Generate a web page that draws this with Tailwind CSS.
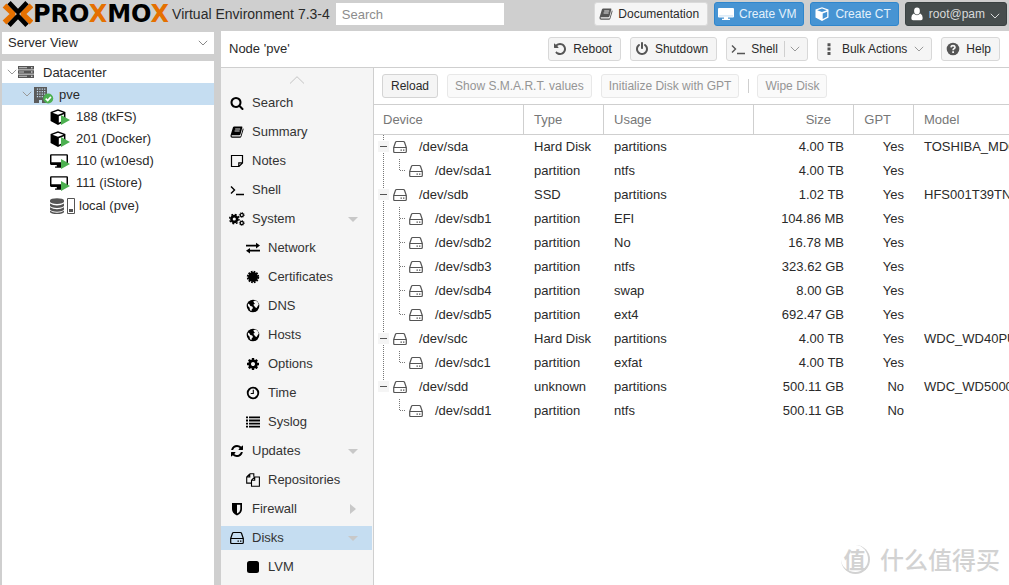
<!DOCTYPE html>
<html lang="en">
<head>
<meta charset="utf-8">
<title>pve - Proxmox Virtual Environment</title>
<script src="https://cdn.jsdelivr.net/npm/@tailwindcss/browser@4"></script>
</head>
<body class="flex h-screen flex-col overflow-hidden bg-[#cfcfcf] font-['Liberation_Sans',Arial,sans-serif] text-[13px] leading-4 text-[#2a2a2a]">

<svg class="hidden" aria-hidden="true">
  <symbol id="search" viewBox="0 0 1792 1792"><path d="M1216 832q0-185-131.500-316.500t-316.500-131.500-316.500 131.500-131.500 316.500 131.500 316.500 316.500 131.500 316.500-131.500 131.500-316.500zm512 832q0 52-38 90t-90 38q-54 0-90-38l-343-342q-179 124-399 124-143 0-273.500-55.500t-225-150-150-225-55.500-273.500 55.500-273.500 150-225 225-150 273.500-55.500 273.500 55.500 225 150 150 225 55.500 273.500q0 220-124 399l343 343q37 37 37 90z"/></symbol>
  <symbol id="book" viewBox="0 0 14 14"><path d="M4.300 1.500h7.500q.8 0 .6.800l-2 7.200q-.3.800-1.200.8H2.300q-.8 0-.8.500t.8.600h7.600q.6 0 .8-.5l2.200-7.600q.9.300.6 1.300l-2.100 7q-.4 1.200-1.600 1.200H2.100Q.4 12.800.5 11q0-.6.300-1.400L2.900 2.500q.3-1 1.400-1z"/><path d="M5.200 4h5M4.600 6h5" stroke="#f5f5f5" stroke-width=".9"/></symbol>
  <symbol id="note" viewBox="0 0 14 14"><path d="M1.500 1.500h11v7.500l-3.500 3.500H1.500zM12.500 8.800H8.800v3.700" fill="none" stroke="currentColor" stroke-width="1.200"/></symbol>
  <symbol id="prompt" viewBox="0 0 14 14"><path d="M1 3.500 4.500 7 1 10.500M6 11.500h8" fill="none" stroke="currentColor" stroke-width="1.400"/></symbol>
  <symbol id="cog" viewBox="0 0 1792 1792"><path d="M1152 896q0-106-75-181t-181-75-181 75-75 181 75 181 181 75 181-75 75-181zm512-109v222q0 12-8 23t-20 13l-185 28q-19 54-39 91 35 50 107 138 10 12 10 25t-9 23q-27 37-99 108t-94 71q-12 0-26-9l-138-108q-44 23-91 38-16 136-29 186-7 28-36 28h-222q-14 0-24.500-8.500t-11.500-21.500l-28-184q-49-16-90-37l-141 107q-10 9-25 9-14 0-25-11-126-114-165-168-7-10-7-23 0-12 8-23 15-21 51-66.500t54-70.500q-27-50-41-99l-183-27q-13-2-21-12.500t-8-23.500v-222q0-12 8-23t19-13l186-28q14-46 39-92-40-57-107-138-10-12-10-24 0-10 9-23 26-36 98.500-107.500t94.500-71.500q13 0 26 10l138 107q44-23 91-38 16-136 29-186 7-28 36-28h222q14 0 24.500 8.500t11.500 21.500l28 184q49 16 90 37l142-107q9-9 24-9 13 0 25 10 129 119 165 170 7 8 7 22 0 12-8 23-15 21-51 66.500t-54 70.500q26 50 41 98l183 28q13 2 21 12.500t8 23.500z"/></symbol>
  <symbol id="cogs" viewBox="0 0 16 14"><g fill="none" stroke="currentColor"><circle cx="5.300" cy="7" r="2.900" stroke-width="2.600"/><circle cx="5.300" cy="7" r="4.700" stroke-width="1.400" stroke-dasharray="1.850 1.840"/><circle cx="12.800" cy="3" r="1.600" stroke-width="1.300"/><circle cx="12.800" cy="3" r="2.500" stroke-width=".8" stroke-dasharray="1 .96"/><circle cx="12.800" cy="11" r="1.600" stroke-width="1.300"/><circle cx="12.800" cy="11" r="2.500" stroke-width=".8" stroke-dasharray="1 .96"/></g></symbol>
  <symbol id="exchange" viewBox="0 0 14 14"><path d="M0 3.700h10V1.800L14 4.600l-4 2.800V5.400H0zM14 8.800H4V6.900L0 9.700l4 2.800v-2h10z"/></symbol>
  <symbol id="cert" viewBox="0 0 14 14"><circle cx="7" cy="7" r="5"/><circle cx="7" cy="7" r="5.300" fill="none" stroke="currentColor" stroke-width="1.800" stroke-dasharray="1.700 1.075"/></symbol>
  <symbol id="globe" viewBox="0 0 14 14"><circle cx="7" cy="7" r="6.300"/><path fill="#f5f5f5" d="M7.300 2.200 9.500 1.500l2 1.300 1.300 2.700-1.200 1.700-1 1.700-1.500-.6L8.300 7l-1-1.200 1.600-1L8 3.800zM1.800 4.600l1.600.7 1 1.700 1.800.6.8 1.500-1.300 1.300-.2 1.700-1.500-.9-.4-2.500L2 7z"/></symbol>
  <symbol id="clock" viewBox="0 0 14 14"><g fill="none" stroke="currentColor"><circle cx="7" cy="7" r="5.300" stroke-width="1.800"/><path d="M7.300 3.800V7.500H4.700" stroke-width="1.100"/></g></symbol>
  <symbol id="list" viewBox="0 0 14 14"><path d="M0 1.500h2v1.800H0zM3 1.500h11v1.800H3zM0 4.600h2v1.800H0zM3 4.600h11v1.800H3zM0 7.700h2v1.800H0zM3 7.700h11v1.800H3zM0 10.800h2v1.800H0zM3 10.800h11v1.800H3z"/></symbol>
  <symbol id="refresh" viewBox="0 0 1792 1792"><path d="M1639 1056q0 5-1 7-64 268-268 434.500t-478 166.500q-146 0-282.500-55t-243.500-157l-129 129q-19 19-45 19t-45-19-19-45v-448q0-26 19-45t45-19h448q26 0 45 19t19 45-19 45l-137 137q71 66 161 102t187 36q134 0 250-65t186-179q11-17 53-117 8-23 30-23h192q13 0 22.500 9.500t9.500 22.500zm25-800v448q0 26-19 45t-45 19h-448q-26 0-45-19t-19-45 19-45l138-138q-148-137-349-137-134 0-250 65t-186 179q-11 17-53 117-8 23-30 23h-199q-13 0-22.500-9.500t-9.500-22.500v-7q65-268 270-434.500t480-166.500q146 0 284 55.500t245 156.500l130-129q19-19 45-19t45 19 19 45z"/></symbol>
  <symbol id="files" viewBox="0 0 14 14"><path d="M3.800.8h4v3M3.800.8.700 3.900v6.200h4.700M3.800.8v3.100H.7M8.700 4h4.700v9.300H5.500V7.200zM8.700 4v3.200H5.500" fill="none" stroke="currentColor" stroke-width="1.100"/></symbol>
  <symbol id="shield" viewBox="0 0 14 14"><path fill-rule="evenodd" d="M2 1h10v6.300Q12 11 7 13.500 2 11 2 7.300zM7 2.700v8.900q3.300-1.900 3.300-4.400V2.700z"/></symbol>
  <symbol id="hdd" viewBox="0 0 14 14"><path d="M.7 7.500h12.600v4q0 1-1 1H1.700q-1 0-1-1zM.7 7.500 2.500 2.300q.3-.8 1.100-.8h6.800q.8 0 1.100.8l1.800 5.200" fill="none" stroke="currentColor" stroke-width="1.200"/><path d="M7.500 9.400h1.400v1.300H7.500zM10 9.400h1.400v1.300H10z"/></symbol>
  <symbol id="square" viewBox="0 0 14 14"><rect x="1" y="1" width="12" height="12" rx="2.500"/></symbol>
  <symbol id="undo" viewBox="0 0 1792 1792"><path d="M1664 896q0 156-61 298t-164 245-245 164-298 61q-172 0-327-72.500t-264-204.500q-7-10-6.500-22.500t8.500-20.500l137-138q10-9 25-9 16 2 23 12 73 95 179 147t225 52q104 0 198.500-40.500t163.500-109.500 109.500-163.500 40.500-198.500-40.500-198.500-109.500-163.500-163.500-109.500-198.500-40.500q-98 0-188 35.500t-160 101.500l137 138q31 30 14 69-17 40-59 40h-448q-26 0-45-19t-19-45v-448q0-42 40-59 39-17 69 14l130 129q107-101 244.500-156.500t284.500-55.500q156 0 298 61t245 164 164 245 61 298z"/></symbol>
  <symbol id="power" viewBox="0 0 1792 1792"><path d="M1664 896q0 156-61 298t-164 245-245 164-298 61-298-61-245-164-164-245-61-298q0-182 80.500-343t226.500-270q43-32 95.500-25t83.500 50q32 42 24.500 94.500t-49.500 84.500q-98 74-151.500 181t-53.500 228q0 104 40.500 198.500t109.500 163.500 163.500 109.500 198.500 40.500 198.500-40.500 163.500-109.500 109.500-163.500 40.500-198.500q0-121-53.500-228t-151.500-181q-42-32-49.500-84.500t24.500-94.500q31-43 84-50t95 25q146 109 226.500 270t80.500 343zm-640-768v640q0 52-38 90t-90 38-90-38-38-90v-640q0-52 38-90t90-38 90 38 38 90z"/></symbol>
  <symbol id="dots" viewBox="0 0 14 14"><path d="M5.500 1.200h3v3h-3zM5.500 5.600h3v3h-3zM5.500 10h3v3h-3z"/></symbol>
  <symbol id="help" viewBox="0 0 14 14"><circle cx="7" cy="7" r="6.300"/><path d="M5 5.300Q5.200 3.700 7 3.700t2 1.500q0 .9-1.100 1.500Q7.100 7.200 7.100 8.300" fill="none" stroke="#f5f5f5" stroke-width="1.700"/><path d="M6.200 9.300h1.800V11H6.200z" fill="#f5f5f5"/></symbol>
  <symbol id="desktop" viewBox="0 0 16 14"><path fill-rule="evenodd" d="M1 1h14q1 0 1 1v7.500q0 1-1 1h-5v1.300h1.500V13h-7v-1.200H6v-1.300H1q-1 0-1-1V2q0-1 1-1zM1.300 2.200v6h13.400v-6z"/></symbol>
  <symbol id="desktop-solid" viewBox="0 0 16 14"><path d="M1 1h14q1 0 1 1v7.500q0 1-1 1h-5v1.300h2V13H4v-1.200h2v-1.300H1q-1 0-1-1V2q0-1 1-1z"/><path d="M1 8.900h14" stroke="#8fc0e6" stroke-width=".5"/></symbol>
  <symbol id="cube" viewBox="0 0 14 14"><path fill-rule="evenodd" d="M7 .2 13.500 2.600v8L7 13.900.5 10.600v-8zM7 1.500 2.200 3.300 7 5.100l4.800-1.800zM7.700 6.400v5.700l4.500-2.300V4.700z"/></symbol>
  <symbol id="user" viewBox="0 0 14 14"><ellipse cx="7" cy="4" rx="2.900" ry="3.400"/><path d="M3.700 6.500Q7 9.800 10.300 6.500 12.700 7.500 12.700 11q0 2.200-1.700 2.200H3Q1.300 13.200 1.300 11q0-3.500 2.400-4.500z"/></symbol>
  <symbol id="server" viewBox="0 0 16 14"><path d="M0 1h16v3.400H0zM0 5.300h16v3.400H0zM0 9.600h16V13H0z"/><path d="M1 2.700h8M1 7h5M1 11.300h8" stroke="#c4c4c4"/><path d="M13 2.200h1.500v1H13zM13 6.500h1.500v1H13zM13 10.800h1.500v1H13z" fill="#fff"/></symbol>
  <symbol id="building" viewBox="0 0 20 17"><path d="M0 0h13v16H8v-3H5v3H0z" fill="#5b5b5b"/><path d="M3.500 1.500v10M5.900 1.500v10M8.300 1.500v10M10.700 1.500v10" stroke="#c5ddf1" stroke-width="1.200" stroke-dasharray="1.300 1.200"/><circle cx="14.200" cy="11.500" r="5" fill="#4cb050"/><path d="m11.700 11.600 2 1.900 3.200-3.600" stroke="#fff" stroke-width="1.600" fill="none"/></symbol>
  <symbol id="play" viewBox="0 0 9 10"><path d="M0 0 9 5 0 10z"/></symbol>
  <symbol id="database" viewBox="0 0 14 16"><path d="M0 2.500a7 2.300 0 0 1 14 0v1.200a7 2.200 0 0 1-14 0zM0 5.500q3 2 7 2t7-2v2.200a7 2.200 0 0 1-14 0zM0 9.300q3 2 7 2t7-2v2.200a7 2.200 0 0 1-14 0zM0 12.800q3 2 7 2t7-2V14a7 2 0 0 1-14 0z"/></symbol>
  <symbol id="down" viewBox="0 0 10 6"><path d="M.8.800 5 5 9.200.8" fill="none" stroke="currentColor"/></symbol>
</svg>

<header class="flex h-[31px] shrink-0 items-start gap-[6px] pr-[2px] pt-[2px]">
  <div class="flex h-6 items-center pl-[2px]">
    <svg class="-mt-px h-[26px] w-[31px] shrink-0" viewBox="0 0 31 26" fill="none" role="img" aria-label="Proxmox">
      <path d="M2.500 4.500 11.500 13 2.500 21.500M29.500 4.500 20.500 13 29.500 21.500" stroke="#e57000" stroke-width="5.400" stroke-linejoin="bevel"/>
      <path d="M7 1.600 16 11 25 1.600M7 24.400 16 15 25 24.400" stroke="#000" stroke-width="4.600"/>
    </svg>
    <span class="whitespace-nowrap font-['DejaVu_Sans',sans-serif] text-2xl font-bold leading-6 text-black">PRO<span class="text-[#e57000]">X</span>MO<span class="text-[#e57000]">X</span></span>
    <span class="whitespace-nowrap pl-[3px] text-sm">Virtual Environment 7.3-4</span>
  </div>
  <input type="search" aria-label="Search" placeholder="Search" class="mt-px h-[22px] w-[168px] bg-white px-[6px] text-[13px] outline-none placeholder:text-[#8c8c8c]">
  <div class="ml-auto flex gap-[6px] text-xs">
    <button class="flex h-6 items-center gap-[5px] whitespace-nowrap rounded-[3px] border border-[#dadada] bg-[#f5f5f5] px-1 pr-2"><svg class="size-[14px] text-[#555]" fill="currentColor"><use href="#book"/></svg>Documentation</button>
    <button class="flex h-6 items-center gap-[5px] whitespace-nowrap rounded-[3px] border border-[#2f86cc] bg-[#4794d3] pl-[3px] pr-[7px] text-[#e4f1fb]"><svg class="h-[14px] w-4 text-white" fill="currentColor"><use href="#desktop-solid"/></svg>Create VM</button>
    <button class="flex h-6 items-center gap-[6px] whitespace-nowrap rounded-[3px] border border-[#2f86cc] bg-[#4794d3] pl-[4px] pr-[7px] text-[#e4f1fb]"><svg class="size-[14px] text-white" fill="currentColor"><use href="#cube"/></svg>Create CT</button>
    <button class="flex h-6 items-center gap-[5px] whitespace-nowrap rounded-[3px] border border-[#3a4242] bg-[#464d4d] pl-[4px] pr-[6px] text-[#d8dada]"><svg class="size-[14px] text-white" fill="currentColor"><use href="#user"/></svg>root@pam<svg class="mt-1 h-[6px] w-[10px]"><use href="#down"/></svg></button>
  </div>
</header>

<main class="flex min-h-0 flex-1 gap-[7px] pl-[2px]">
  <aside class="flex w-[212px] shrink-0 flex-col gap-[7px] pt-px">
    <label class="relative block h-[22px] bg-white">
      <select aria-label="View" class="h-full w-full appearance-none pl-[6px] text-[13px] outline-none"><option>Server View</option></select>
      <svg class="pointer-events-none absolute right-[6px] top-2 h-[6px] w-[10px] text-[#888]"><use href="#down"/></svg>
    </label>
    <ul class="flex-1 bg-white" role="tree" id="tree"></ul>
  </aside>

  <section class="flex min-w-0 flex-1 flex-col bg-white">
    <div class="flex h-[37px] shrink-0 items-center border-b border-[#cfcfcf] pl-2 pr-[9px]">
      <h1>Node 'pve'</h1>
      <div class="ml-auto flex gap-[9px] text-xs">
        <button class="flex h-6 items-center gap-[6px] rounded-[3px] border border-[#d8d8d8] bg-[#f5f5f5] pl-[4px] pr-2"><svg class="size-[14px] text-[#555]" fill="currentColor"><use href="#undo"/></svg>Reboot</button>
        <button class="flex h-6 items-center gap-[6px] rounded-[3px] border border-[#d8d8d8] bg-[#f5f5f5] pl-[4px] pr-2"><svg class="size-[14px] text-[#555]" fill="currentColor"><use href="#power"/></svg>Shutdown</button>
        <button class="flex h-6 items-center gap-[6px] rounded-[3px] border border-[#d8d8d8] bg-[#f5f5f5] pl-[4px] pr-[7px]"><svg class="size-[14px] text-[#555]" fill="currentColor"><use href="#prompt"/></svg>Shell<span class="h-4 border-l border-[#d0d0d0]"></span><svg class="-ml-px h-[6px] w-[10px] text-[#999]"><use href="#down"/></svg></button>
        <button class="flex h-6 items-center gap-[6px] whitespace-nowrap rounded-[3px] border border-[#d8d8d8] bg-[#f5f5f5] pl-[4px] pr-[7px]"><svg class="size-[14px] text-[#555]" fill="currentColor"><use href="#dots"/></svg>Bulk Actions<svg class="ml-px h-[6px] w-[10px] text-[#999]"><use href="#down"/></svg></button>
        <button class="flex h-6 items-center gap-[6px] rounded-[3px] border border-[#d8d8d8] bg-[#f5f5f5] pl-[4px] pr-2"><svg class="size-[14px] text-[#555]" fill="currentColor"><use href="#help"/></svg>Help</button>
      </div>
    </div>
    <div class="flex min-h-0 flex-1">
      <nav class="w-[153px] shrink-0 overflow-hidden border-r border-[#cfcfcf] bg-[#f5f5f5] pr-px" aria-label="Node">
        <button class="flex h-[23px] w-full items-center justify-center text-[#c4c4c4]" aria-label="Scroll up"><svg class="h-[8px] w-4" viewBox="0 0 16 8"><path d="M1 7.500 8 .7l7 6.800" fill="none" stroke="currentColor"/></svg></button>
        <ul class="flex flex-col gap-[5px]" id="nav"></ul>
      </nav>
      <div class="min-w-0 flex-1 overflow-hidden">
        <div class="flex h-9 items-center gap-[9px] px-2 text-xs">
          <button class="h-6 rounded-[3px] border border-[#d4d4d4] bg-[#f5f5f5] px-2">Reload</button>
          <button disabled class="h-6 whitespace-nowrap rounded-[3px] border border-[#e8e8e8] bg-[#fafafa] px-[7px] text-[#959595]">Show S.M.A.R.T. values</button>
          <button disabled class="h-6 whitespace-nowrap rounded-[3px] border border-[#e8e8e8] bg-[#fafafa] px-[7px] text-[#959595]">Initialize Disk with GPT</button>
          <span class="h-[14px] border-l border-[#cfcfcf]"></span>
          <button disabled class="-ml-px h-6 whitespace-nowrap rounded-[3px] border border-[#e8e8e8] bg-[#fafafa] px-[7px] text-[#959595]">Wipe Disk</button>
        </div>
        <table class="w-full table-fixed border-separate border-spacing-0">
          <colgroup><col class="w-[150px]"><col class="w-20"><col class="w-[150px]"><col class="w-[100px]"><col class="w-[60px]"><col></colgroup>
          <thead>
            <tr class="h-[31px] text-left text-[#777]">
              <th class="border-y border-r border-[#cfcfcf] px-[9px] py-0 font-normal">Device</th>
              <th class="border-y border-r border-[#cfcfcf] px-[10px] py-0 font-normal">Type</th>
              <th class="border-y border-r border-[#cfcfcf] px-[10px] py-0 font-normal">Usage</th>
              <th class="border-y border-r border-[#cfcfcf] py-0 pr-[22px] text-right font-normal">Size</th>
              <th class="border-y border-r border-[#cfcfcf] py-0 pr-[22px] text-right font-normal">GPT</th>
              <th class="border-y border-[#cfcfcf] px-[10px] py-0 font-normal">Model</th>
            </tr>
          </thead>
          <tbody id="disks"></tbody>
        </table>
      </div>
    </div>
  </section>
</main>

<div class="pointer-events-none absolute bottom-[8px] right-[9px] flex items-center gap-[10px] font-['Noto_Sans_CJK_SC',sans-serif] text-[24px] font-medium leading-9 text-[#d2d2d2]" lang="zh">
  <span class="flex size-[29px] items-center justify-center rounded-full border-b-2 border-r-2 border-[#d2d2d2] text-[22px] font-bold">值</span>
  <span>什么值得买</span>
</div>

<script>
const tree = [
  ['Datacenter', 0, '<svg class="h-[14px] w-4 text-[#555]" fill="currentColor"><use href="#server"/></svg>'],
  ['pve', 1, '<svg class="h-[17px] w-5"><use href="#building"/></svg>'],
  ['188 (tkFS)', 2, 'cube'], ['201 (Docker)', 2, 'cube'],
  ['110 (w10esd)', 2, 'desktop'], ['111 (iStore)', 2, 'desktop'],
  ['local (pve)', 2, 'storage'],
];
const guest = {
  cube: '<span class="relative flex h-4 w-5"><svg class="h-4 w-4 text-black" fill="currentColor"><use href="#cube"/></svg><svg class="absolute right-0 bottom-0 h-[10px] w-[9px] text-[#4cb050]" fill="currentColor"><use href="#play"/></svg></span>',
  desktop: '<span class="relative flex h-4 w-5"><svg class="h-4 w-[18px] text-black" fill="currentColor"><use href="#desktop"/></svg><svg class="absolute right-0 bottom-0 h-[10px] w-[9px] text-[#4cb050]" fill="currentColor"><use href="#play"/></svg></span>',
  storage: '<svg class="h-4 w-[14px] text-[#555]" fill="currentColor"><use href="#database"/></svg><svg class="ml-[3px] h-4 w-2" viewBox="0 0 8 16"><path d="M.5.5h7v15h-7z" fill="#fff" stroke="#555"/><path d="M2 11h4v3H2z" fill="#555"/></svg>',
};
const arrow = '<svg class="h-[6px] w-[10px] text-[#999]"><use href="#down"/></svg>';
document.getElementById('tree').innerHTML = tree.map(([t, d, i]) =>
  d === 0 ? `<li role="treeitem" class="flex h-[22px] items-center pl-[5px]">${arrow}<span class="ml-px flex">${i}</span><span class="ml-[9px] pt-px">${t}</span></li>`
  : d === 1 ? `<li role="treeitem" aria-selected="true" class="flex h-[22px] items-center bg-[#c5ddf1] pl-[20px]">${arrow}<span class="ml-[2px] flex pt-[2px]">${i}</span><span class="ml-[5px] pt-px">${t}</span></li>`
  : `<li role="treeitem" class="flex items-center pl-[48px] ${i === 'storage' ? 'h-6' : 'h-[22px]'}"><span class="flex pt-[2px]">${guest[i]}</span><span class="pt-px ${i === 'storage' ? 'ml-1' : 'ml-[6px]'}">${t}</span></li>`
).join('');

const nav = [
  ['Search', 'search'], ['Summary', 'book'], ['Notes', 'note'], ['Shell', 'prompt'], ['System', 'cogs', 0, 'd'],
  ['Network', 'exchange', 1], ['Certificates', 'cert', 1], ['DNS', 'globe', 1], ['Hosts', 'globe', 1],
  ['Options', 'cog', 1], ['Time', 'clock', 1], ['Syslog', 'list', 1], ['Updates', 'refresh', 0, 'd'],
  ['Repositories', 'files', 1], ['Firewall', 'shield', 0, 'r'], ['Disks', 'hdd', 0, 'd'], ['LVM', 'square', 1],
];
const caret = {
  d: '<svg class="ml-auto h-[5px] w-[10px]" viewBox="0 0 10 5"><path d="M0 0h10L5 5z" fill="#c8c8c8"/></svg>',
  r: '<svg class="ml-auto mr-[2px] h-[10px] w-[6px]" viewBox="0 0 6 10"><path d="M0 0v10l6-5z" fill="#c8c8c8"/></svg>',
};
document.getElementById('nav').innerHTML = nav.map(([t, i, sub, c]) =>
  `<li><a href="#" class="flex h-6 items-center gap-[7px] pr-[14px] text-[#333] ${sub ? 'pl-6' : 'pl-2'} ${t === 'Disks' ? 'bg-[#c5ddf1]' : ''}"><svg class="${i === 'cogs' ? 'h-[14px] w-4' : 'mx-px size-[14px]'} text-black" fill="currentColor"><use href="#${i}"/></svg>${t}${caret[c] || ''}</a></li>`
).join('');

const disks = [
  ['/dev/sda', 'Hard Disk', 'partitions', '4.00 TB', 'Yes', 'TOSHIBA_MD04ACA400'],
  ['/dev/sda1', 'partition', 'ntfs', '4.00 TB', 'Yes', '', 'end'],
  ['/dev/sdb', 'SSD', 'partitions', '1.02 TB', 'Yes', 'HFS001T39TNF'],
  ['/dev/sdb1', 'partition', 'EFI', '104.86 MB', 'Yes', '', 'mid'],
  ['/dev/sdb2', 'partition', 'No', '16.78 MB', 'Yes', '', 'mid'],
  ['/dev/sdb3', 'partition', 'ntfs', '323.62 GB', 'Yes', '', 'mid'],
  ['/dev/sdb4', 'partition', 'swap', '8.00 GB', 'Yes', '', 'mid'],
  ['/dev/sdb5', 'partition', 'ext4', '692.47 GB', 'Yes', '', 'end'],
  ['/dev/sdc', 'Hard Disk', 'partitions', '4.00 TB', 'Yes', 'WDC_WD40PURX'],
  ['/dev/sdc1', 'partition', 'exfat', '4.00 TB', 'Yes', '', 'end'],
  ['/dev/sdd', 'unknown', 'partitions', '500.11 GB', 'No', 'WDC_WD5000AAKX'],
  ['/dev/sdd1', 'partition', 'ntfs', '500.11 GB', 'No', '', 'end'],
];
const hdd = '<svg class="size-[14px] shrink-0 text-[#555]" fill="currentColor"><use href="#hdd"/></svg>';
document.getElementById('disks').innerHTML = disks.map(([dev, type, use, size, gpt, model, kind], n) => {
  const lead = kind
    ? `<svg class="h-6 w-[35px] shrink-0" viewBox="0 0 35 24" fill="none" stroke="#777" stroke-dasharray="1 1">${n < 11 ? '<path d="M9.500 0v24"/>' : ''}<path d="M25.500 0v${kind === 'end' ? 12 : 24}M26 11.500h5"/></svg>`
    : `<button aria-label="Collapse ${dev}" class="h-6 w-[19px] shrink-0"><svg class="h-6 w-[19px]" viewBox="0 0 19 24" fill="none"><path d="M9.500 0v${n === 10 ? 12 : 24}" stroke="#777" stroke-dasharray="1 1"/><path d="M4 6h11v11H4z" fill="#f5f5f5"/><path d="M6 11.500h7" stroke="#555"/></svg></button>`;
  return `<tr class="h-6"><td class="p-0"><div class="flex h-6 items-center">${lead}${hdd}<span class="ml-[12px]">${dev}</span></div></td>
    <td class="whitespace-nowrap px-[10px] py-0">${type}</td><td class="px-[10px] py-0">${use}</td>
    <td class="whitespace-nowrap px-[10px] py-0 text-right">${size}</td><td class="px-[10px] py-0 text-right">${gpt}</td>
    <td class="overflow-hidden whitespace-nowrap py-0 pl-[10px]">${model}</td></tr>`;
}).join('');
</script>
</body>
</html>
